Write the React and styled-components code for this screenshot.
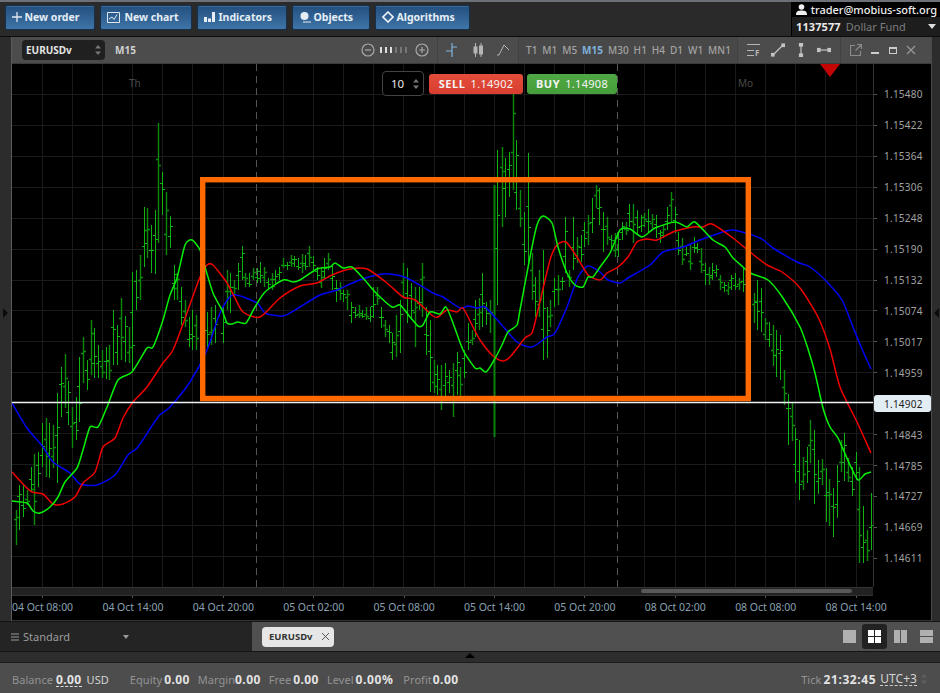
import React from 'react';
import styled, { createGlobalStyle } from 'styled-components';

const Global = createGlobalStyle`
  html, body { margin: 0; padding: 0; background: #2b2b2b; }
  body { font-family: "Noto Sans", "DejaVu Sans", sans-serif; overflow: hidden; }
`;

const bars = [[16,510,545],[19,485,530],[23,485,517],[27,490,505],[31,467,492],[34,454,525],[38,452,487],[42,423,467],[46,418,477],[49,423,478],[53,425,468],[57,393,483],[61,367,417],[65,354,408],[68,381,425],[72,407,448],[76,397,440],[79,357,422],[83,337,383],[87,360,390],[91,320,375],[94,328,378],[98,345,378],[102,350,378],[106,347,379],[109,345,380],[113,310,365],[117,325,365],[121,298,360],[125,316,362],[129,327,363],[132,272,370],[136,270,310],[140,255,300],[144,207,267],[147,208,258],[151,225,273],[155,210,274],[158,123,243],[162,172,215],[166,192,255],[170,216,248],[174,265,300],[177,273,300],[181,287,325],[185,300,327],[189,317,347],[192,310,350],[196,315,350],[207,312,350],[211,307,345],[215,305,343],[223,307,343],[227,270,310],[230,273,313],[234,280,297],[238,263,290],[242,246,280],[245,273,287],[249,273,287],[253,268,280],[257,268,283],[260,262,283],[264,267,287],[268,278,290],[272,273,290],[275,270,283],[279,267,280],[283,258,268],[287,262,270],[291,255,267],[294,256,267],[298,258,270],[302,254,273],[305,255,270],[309,246,267],[313,256,270],[317,267,280],[321,268,288],[324,258,278],[328,253,270],[332,265,290],[336,280,302],[340,282,300],[343,290,302],[347,290,310],[351,302,323],[355,307,318],[359,305,318],[362,310,318],[366,307,320],[370,307,322],[373,287,318],[377,287,305],[381,307,328],[385,320,337],[389,325,343],[392,333,360],[396,315,357],[400,300,353],[403,263,297],[407,268,323],[411,283,320],[415,287,347],[419,287,310],[422,263,317],[426,307,355],[430,320,392],[434,360,393],[437,365,395],[441,365,410],[445,363,396],[449,370,393],[453,363,417],[457,352,395],[460,367,397],[464,350,378],[468,323,350],[472,330,345],[475,300,337],[479,298,330],[482,273,327],[486,302,325],[490,300,333],[497,150,305],[502,147,227],[505,158,217],[509,152,197],[513,90,190],[516,140,210],[520,190,227],[524,212,265],[528,153,263],[532,253,300],[535,277,317],[539,270,317],[543,250,360],[547,307,358],[550,300,327],[554,278,307],[558,275,305],[562,277,290],[565,217,273],[569,270,287],[573,217,270],[577,237,263],[581,235,262],[584,222,247],[588,215,245],[592,198,233],[596,185,208],[599,188,225],[603,212,252],[607,217,245],[611,235,250],[615,233,257],[618,232,257],[622,222,240],[626,222,235],[629,204,227],[633,204,243],[637,210,235],[641,215,232],[644,213,227],[648,209,232],[652,214,228],[656,215,238],[660,230,243],[663,225,238],[667,207,230],[671,192,223],[675,207,233],[678,232,255],[682,238,265],[686,247,256],[690,245,270],[694,237,253],[697,243,253],[701,248,273],[705,263,285],[709,267,285],[712,263,280],[716,265,277],[720,275,290],[724,282,292],[728,282,295],[731,275,290],[735,273,290],[739,278,290],[743,267,292],[754,293,323],[757,280,330],[761,288,332],[765,318,340],[769,322,347],[773,325,366],[776,330,377],[780,335,380],[784,370,405],[788,394,445],[792,402,441],[795,428,483],[799,440,500],[803,457,490],[807,447,483],[810,420,463],[814,430,504],[818,460,494],[822,459,485],[826,468,522],[829,479,526],[833,488,537],[837,465,518],[841,440,472],[844,433,481],[848,458,482],[852,467,496],[856,452,480],[859,467,563],[863,506,563],[867,530,561],[871,493,550]];

const greenLine = [[12,501],[27,503],[33,511],[40,513],[50,507],[58,497],[65,482],[77,468],[83,450],[90,427],[98,427],[107,407],[118,380],[132,372],[147,348],[153,347],[163,320],[170,295],[177,278],[185,245],[192,240],[200,250],[205,267],[213,293],[222,310],[227,323],[232,324],[238,322],[246,323],[255,307],[265,292],[283,280],[293,282],[300,280],[317,269],[330,267],[335,263],[343,268],[352,267],[363,278],[375,292],[392,307],[400,305],[410,317],[418,326],[423,325],[430,312],[440,314],[446,307],[453,323],[463,350],[475,368],[480,368],[486,372],[493,362],[502,345],[508,332],[517,325],[520,310],[530,257],[537,225],[543,216],[552,223],[558,247],[567,273],[575,285],[583,287],[588,277],[593,277],[600,267],[610,253],[620,230],[630,229],[642,237],[655,228],[675,222],[687,227],[695,222],[713,240],[725,247],[733,258],[743,267],[750,273],[768,280],[783,298],[800,327],[808,349],[815,373],[823,408],[830,427],[838,438],[850,465],[858,480],[865,474],[871,472]];
const redLine = [[12,472],[22,483],[32,492],[43,494],[53,504],[63,504],[75,497],[83,483],[95,472],[103,447],[115,438],[123,418],[133,402],[147,387],[163,363],[173,350],[187,313],[200,277],[207,265],[213,265],[227,283],[235,298],[243,312],[260,317],[280,298],[300,286],[317,283],[332,275],[350,269],[367,269],[387,283],[403,297],[415,300],[433,316],[438,317],[447,310],[457,312],[463,308],[473,327],[480,340],[492,355],[502,361],[510,357],[525,338],[532,333],[538,310],[550,260],[557,245],[566,242],[577,257],[588,275],[600,280],[607,273],[618,267],[628,257],[637,242],[647,239],[657,240],[673,232],[693,227],[703,227],[712,224],[733,238],[750,252],[767,265],[782,272],[800,288],[818,317],[830,349],[840,387],[857,422],[871,453]];
const blueLine = [[12,403],[27,428],[43,447],[53,462],[70,473],[80,484],[97,485],[115,475],[128,455],[138,447],[158,417],[170,407],[190,382],[207,350],[220,313],[233,295],[257,303],[265,313],[283,316],[300,307],[320,295],[337,290],[357,281],[377,275],[390,274],[407,278],[433,293],[443,297],[460,308],[468,306],[477,308],[485,307],[500,323],[517,342],[532,347],[547,337],[555,333],[567,307],[578,277],[588,266],[600,272],[608,280],[620,283],[628,278],[650,265],[663,252],[683,247],[700,240],[717,234],[733,230],[760,238],[773,248],[797,262],[810,267],[827,282],[842,300],[853,327],[862,349],[871,369]];

const smooth = (p) => {
  let d = `M${p[0][0]} ${p[0][1]}`;
  for (let i = 0; i < p.length - 1; i++) {
    const a = p[Math.max(0, i - 1)], b = p[i], c = p[i + 1], e = p[Math.min(p.length - 1, i + 2)];
    const t = 0.12;
    d += `C${(b[0] + (c[0] - a[0]) * t).toFixed(1)} ${(b[1] + (c[1] - a[1]) * t).toFixed(1)} ${(c[0] - (e[0] - b[0]) * t).toFixed(1)} ${(c[1] - (e[1] - b[1]) * t).toFixed(1)} ${c[0]} ${c[1]}`;
  }
  return d;
};

const barPath = (list) => list.map(([x, t, b], i) => {
  const h = b - t;
  const o = Math.round(t + h * (0.25 + ((i * 37) % 50) / 100));
  const c = Math.round(t + h * (0.2 + ((i * 53) % 60) / 100));
  return `M${x + .5} ${t}V${b}M${x - 2} ${o + .5}H${x}M${x + 1} ${c + .5}H${x + 3}`;
}).join('');
const brightBars = barPath(bars.filter((_, i) => (i * 7) % 5 > 1));
const darkBars = barPath(bars.filter((_, i) => (i * 7) % 5 <= 1));

const gridX = [42,72,102,132,162,192,223,283,313,343,373,403,434,464,494,524,554,584,644,675,705,735,765,795,825,856];
const gridY = [94,125,156,187,218,249,280,310,341,372,433,464,495,525,556];
const prices = ['1.15480','1.15422','1.15364','1.15306','1.15248','1.15190','1.15132','1.15074','1.15017','1.14959','1.14902','1.14843','1.14785','1.14727','1.14669','1.14611'];
const times = ['04 Oct 08:00','04 Oct 14:00','04 Oct 20:00','05 Oct 02:00','05 Oct 08:00','05 Oct 14:00','05 Oct 20:00','08 Oct 02:00','08 Oct 08:00','08 Oct 14:00'];
const frames = ['T1','M1','M5','M15','M30','H1','H4','D1','W1','MN1'];

const Page = styled.div`
  width: 940px; height: 693px; display: flex; flex-direction: column; overflow: hidden; background: #2b2b2b;
`;
const TopBar = styled.header`
  height: 34px; flex: none; display: flex; justify-content: space-between;
  border-top: 2px solid #6d7177; border-bottom: 1px solid #0c0c0c; background: #2a2a2a;
`;
const Actions = styled.div`
  display: flex; gap: 5px; padding: 3px 0 0 4.5px;
`;
const ActionButton = styled.button`
  width: ${p => p.$w}px; height: 25px; padding: 0 0 2px ${p => p.$pad}px; margin: 0; display: flex; align-items: center; gap: ${p => p.$gap}px;
  border: 1px solid #16304c; border-radius: 2px; background: linear-gradient(#234f7e, #3f75a8);
  color: #e6eef5; font: 700 10.5px "Noto Sans", sans-serif; white-space: nowrap;
  box-shadow: inset 0 1px 0 #3b6a9b;
`;
const User = styled.div`
  width: 149px; background: #000; display: flex; flex-direction: column; font-size: 11px;
`;
const UserLine = styled.div`
  height: 15px; display: flex; align-items: center; padding-left: 5px; gap: 1px; color: #eee; white-space: nowrap; font-weight: 500; letter-spacing: -.02px;
`;
const AccountLine = styled.div`
  flex: 1; display: flex; align-items: center; padding: 0 4px 0 4px; gap: 5px; background: #1d1d1d; border-left: 1px solid #000; white-space: nowrap;
`;
const AccountId = styled.b`color: #e8e8e8; letter-spacing: .1px;`;
const AccountName = styled.span`color: #7c7c7c; flex: 1;`;
const Caret = styled.span`
  width: 0; height: 0; border: 4px solid transparent; border-top: 5px solid #ddd; border-bottom: 0;
`;

const Middle = styled.div`
  height: 584px; flex: none; display: flex;
`;
const SideStrip = styled.div`
  width: ${p => p.$w}px; box-sizing: border-box; flex: none; display: flex; align-items: center; justify-content: center; background: #2c2c2c;
  ${p => p.$left ? 'border-right: 1px solid #5a5a5a;' : 'border-left: 1px solid #4a4a4a;'}
`;
const Arrow = styled.i`
  width: 0; height: 0; margin-top: -32px; border: 5px solid transparent;
  ${p => p.$left ? 'border-left: 5px solid #0c0c0c; border-right: 0;' : 'border-right: 5px solid #0c0c0c; border-left: 0;'}
`;
const ChartWindow = styled.section`
  flex: 1; display: flex; flex-direction: column; background: #000; min-width: 0;
`;
const ChartHeader = styled.div`
  height: 27px; flex: none; display: flex; align-items: stretch; background: #4a4a4a; border-bottom: 1px solid #3a3a3a; box-sizing: border-box;
`;
const HeaderGroup = styled.div`
  width: ${p => p.$w}px; flex: none; display: flex; align-items: center; box-sizing: border-box; padding: ${p => p.$pad || '0'};
  gap: ${p => p.$gap || 0}px; justify-content: ${p => p.$justify || 'flex-start'};
  background: ${p => p.$alt ? '#484848' : '#4c4c4c'};
  border-right: ${p => p.$end ? 0 : '1px solid #414141'};
`;
const SymbolSelect = styled.div`
  width: 83px; height: 20px; margin-left: 10px; box-sizing: border-box; padding: 0 4px; display: flex; align-items: center; justify-content: space-between;
  background: #202020; border-radius: 4px; color: #e4e4e4; font-size: 10px; font-weight: 700;
`;
const Period = styled.span`
  margin-left: 10px; color: #d0d0d0; font-size: 10px; font-weight: 700;
`;
const Spacer = styled.div`flex: 1;`;
const ZoomDots = styled.svg`
  margin: 0 5px;
`;
const EndGap = styled.div`width: 8px;`;
const Frame = styled.span`
  color: ${p => p.$on ? '#7fb2dc' : '#a3a3a3'}; font-size: 10px; font-weight: ${p => p.$on ? 700 : 500}; letter-spacing: .1px;
`;
const ChartBody = styled.div`
  height: 523px; flex: none; display: flex; position: relative;
`;
const Plot = styled.svg`
  width: 861px; height: 523px; flex: none; display: block;
`;
const DayLabel = styled.text`
  fill: #4a4a4a; font: 10px "Noto Sans", sans-serif;
`;
const PriceAxis = styled.div`
  flex: 1; display: flex; flex-direction: column; padding-top: 15px; border-left: 1px solid #333; background: #000;
`;
const PriceRow = styled.div`
  height: 30.93px; flex: none; display: flex; align-items: center; position: relative; font-size: 10px; letter-spacing: .25px;
  color: #a2a2a2; padding-left: 10px;
  &::before { content: ""; position: absolute; left: 0; top: 15px; width: 3px; height: 1px; background: #555; }
`;
const PriceTag = styled.span`
  position: absolute; left: 0; top: 7px; width: 57px; height: 17px; box-sizing: border-box; padding-left: 10px; display: flex; align-items: center;
  background: #e2eef4; border-radius: 3px; color: #222;
`;
const Scrollbar = styled.div`
  height: 9px; width: 861px; flex: none; box-sizing: border-box; background: #222; border-top: 1px solid #333; border-bottom: 1px solid #333; padding: 1px 0 0 629px;
`;
const ScrollThumb = styled.div`
  width: 211px; height: 4px; border-radius: 2px; background: #585858;
`;
const TimeAxis = styled.div`
  height: 25px; flex: none; display: flex; background: #000; border-bottom: 1px solid #333; box-sizing: border-box;
`;
const TimeLabel = styled.span`
  width: 90.4px; flex: none; position: relative; padding-top: 4px; box-sizing: border-box; color: #8ba0b2; font-size: 10.5px; letter-spacing: -.02px; white-space: nowrap; line-height: 14px;
  &::before { content: ""; position: absolute; left: 30px; top: 0; width: 1px; height: 2px; background: #555; }
`;

const OrderPanel = styled.div`
  position: absolute; left: 370px; top: 7px; display: flex; align-items: center; gap: 5px;
`;
const Qty = styled.div`
  width: 42px; height: 25px; box-sizing: border-box; display: flex; align-items: center; justify-content: space-between; padding: 0 4px 0 8px;
  background: #000; border: 1px solid #444; border-radius: 4px; color: #e8e8e8; font-size: 11.5px;
`;
const TradeButton = styled.div`
  width: ${p => p.$w}px; height: 20px; display: flex; align-items: center; justify-content: center; gap: 5px; border-radius: 3px;
  background: ${p => p.$c}; color: #f4f4f4; font-size: 11px; letter-spacing: .3px; white-space: nowrap;
  margin-left: ${p => p.$ml || 0}px;
  b { font-weight: 700; letter-spacing: .6px; }
`;

const TabBar = styled.div`
  height: 30px; flex: none; display: flex; border-top: 1px solid #141414; box-sizing: border-box;
`;
const WorkspacePicker = styled.div`
  width: 252px; flex: none; box-sizing: border-box; padding: 0 123px 0 11px; display: flex; align-items: center; gap: 4px; background: #242424; color: #9c9c9c; font-size: 11px;
`;
const WorkspaceCaret = styled.i`
  margin-left: auto; width: 0; height: 0; border: 3.5px solid transparent; border-top: 4px solid #9a9a9a; border-bottom: 0;
`;
const TabStrip = styled.div`
  flex: 1; display: flex; align-items: center; padding: 0 1px 0 10px; background: #505050;
`;
const Tab = styled.div`
  width: 72px; height: 20px; box-sizing: border-box; padding: 0 4px 0 7px; display: flex; align-items: center; justify-content: space-between;
  border-radius: 4px; background: #e6e6e6; color: #333; font-size: 9.5px; font-weight: 700;
`;
const Layouts = styled.div`
  margin-left: auto; display: flex; align-items: center;
`;
const LayoutSlot = styled.div`
  width: ${p => p.$w}px; height: 25px; display: flex; align-items: center; justify-content: center; border-radius: 3px;
  background: ${p => p.$on ? '#222' : 'transparent'};
`;
const Stripe = styled.div`
  height: 12px; flex: none; display: flex; justify-content: center; background: #2d2d2d; border-top: 1px solid #151515; border-bottom: 1px solid #1b1b1b; box-sizing: border-box;
`;
const StripeArrow = styled.i`
  width: 0; height: 0; margin-top: 1px; border: 5px solid transparent; border-bottom: 5px solid #000; border-top: 0;
`;
const StatusBar = styled.footer`
  height: 30px; flex: none; display: flex; align-items: center; box-sizing: border-box; padding: 2px 13px 0 12px; background: #4d4d4d; font-size: 11px; color: #939393; white-space: nowrap; letter-spacing: .05px;
`;
const Stat = styled.span`
  margin-right: ${p => p.$mr ?? 8}px; display: inline-flex; align-items: baseline; gap: ${p => p.$gap ?? 2}px;
`;
const Value = styled.b`
  color: #e4e4e4; font-size: 12px; letter-spacing: ${p => p.$ls ?? 0.4}px;
`;
const DashedValue = styled(Value)`
  border-bottom: 1px dashed #ddd; line-height: 13px;
`;
const Plain = styled.span`
  color: #d4d4d4; margin-left: 2px;
`;
const UtcValue = styled.span`
  color: #d4d4d4; font-size: 12px; border-bottom: 1px dashed #ccc; line-height: 13px;
`;
const SpinBox = styled.span`
  margin-left: 4px; display: flex;
`;
const IconBox = styled.svg`
  flex: none;
`;

const Spin = ({ c = '#777' }) => (
  <svg width="6" height="12" viewBox="0 0 6 12"><path d="M3 1 6 4.500H0zM3 11 0 7.500H6z" fill={c} /></svg>
);
const Ic = ({ w = 14, h = 14, children, s = '#a8a8a8', sw = 1.2 }) => (
  <IconBox width={w} height={h} viewBox={`0 0 ${w} ${h}`} fill="none" stroke={s} strokeWidth={sw}>{children}</IconBox>
);

export default function App() {
  return (
    <Page>
      <Global />
      <TopBar>
        <Actions>
          <ActionButton $w={90} $pad={6} $gap={3}><Ic w={10} h={10} s="#dfe8f0" sw={1.3}><path d="M5 0v10M0 5h10" /></Ic>New order</ActionButton>
          <ActionButton $w={92} $pad={6} $gap={5}><Ic w={13} h={12} s="#dfe8f0" sw={1}><path d="M.5 1.500h12v10H.5z" /><path d="M2 8l3-2 2 2.500 3-5" /></Ic>New chart</ActionButton>
          <ActionButton $w={90} $pad={6} $gap={4}><svg width="11" height="11" viewBox="0 0 11 11" fill="#e6eef5"><path d="M0 6h3v5H0zM4 7.500h3V11H4zM8 1h3v10H8z" /></svg>Indicators</ActionButton>
          <ActionButton $w={78} $pad={7} $gap={3}><svg width="11" height="12" viewBox="0 0 11 12" fill="#e6eef5"><circle cx="4.500" cy="5" r="4" /><path d="M3 10.500h8v1H3z" /></svg>Objects</ActionButton>
          <ActionButton $w={95} $pad={6} $gap={3}><Ic w={12} h={12} s="#eef3f8" sw={1.6}><path d="M6 1 11 6 6 11 1 6z" /></Ic>Algorithms</ActionButton>
        </Actions>
        <User>
          <UserLine>
            <svg width="11" height="11" viewBox="0 0 11 11" fill="#f0f0f0"><circle cx="5.500" cy="3" r="2.800" /><path d="M0 11c0-4 2.500-4.500 5.500-4.500S11 7 11 11z" /></svg>
            &nbsp;trader@mobius-soft.org
          </UserLine>
          <AccountLine><AccountId>1137577</AccountId><AccountName>Dollar Fund</AccountName><Caret /></AccountLine>
        </User>
      </TopBar>
      <Middle>
        <SideStrip $w={12} $left><Arrow $left /></SideStrip>
        <ChartWindow>
          <ChartHeader>
            <HeaderGroup $w={426}>
              <SymbolSelect>EURUSDv<Spin /></SymbolSelect>
              <Period>M15</Period>
              <Spacer />
              <Ic w={14} h={14}><circle cx="7" cy="7" r="6" /><path d="M4 7h6" /></Ic>
              <ZoomDots width="30" height="6" viewBox="0 0 30 6">
                <path d="M1 0v6M6 0v6M11 0v6" stroke="#ddd" strokeWidth="2" />
                <path d="M16 0v6M21 0v6M26 0v6" stroke="#777" strokeWidth="2" />
              </ZoomDots>
              <Ic w={14} h={14}><circle cx="7" cy="7" r="6" /><path d="M4 7h6M7 4v6" /></Ic>
              <EndGap />
            </HeaderGroup>
            <HeaderGroup $w={81} $pad="0 0 0 8px" $gap={12}>
              <Ic w={15} h={14} s="#7fb2dc"><path d="M6 0v14M0 8h6M6 4h5" /></Ic>
              <svg width="11" height="14" viewBox="0 0 11 14" fill="#b5b5b5" stroke="#b5b5b5"><path d="M2.500 0v14M8 0v14" fill="none" /><rect x="1" y="4" width="3" height="6" /><rect x="6.500" y="3" width="3" height="8" /></svg>
              <Ic w={14} h={14} s="#b5b5b5" sw={1}><path d="M1 12h2L8 2l5 5" /></Ic>
            </HeaderGroup>
            <HeaderGroup $w={219} $alt $pad="0 6px 0 7px" $justify="space-between">
              {frames.map(f => <Frame key={f} $on={f === 'M15'}>{f}</Frame>)}
            </HeaderGroup>
            <HeaderGroup $w={103} $pad="0 0 0 8px" $gap={10}>
              <svg width="15" height="14" viewBox="0 0 15 14" fill="none" stroke="#b5b5b5"><path d="M1 1.500h13M1 7.500h7M1 12.500h7" /><text x="9" y="13" fontSize="8" fontWeight="700" fill="#b5b5b5" stroke="none">F</text></svg>
              <Ic w={14} h={14} s="#c4c4c4"><path d="M2 12 12 2" /><rect x="0.500" y="10.500" width="2.500" height="2.500" fill="#c4c4c4" /><rect x="11" y="1" width="2.500" height="2.500" fill="#c4c4c4" /></Ic>
              <Ic w={12} h={14} s="#c4c4c4"><path d="M6 1v12" /><rect x="4.500" y="0.500" width="3" height="2.500" fill="#c4c4c4" /><rect x="4.500" y="11" width="3" height="2.500" fill="#c4c4c4" /></Ic>
              <Ic w={14} h={6} s="#c4c4c4"><path d="M1 3h12" /><rect x="0.500" y="1.500" width="2.500" height="3" fill="#c4c4c4" /><rect x="11" y="1.500" width="2.500" height="3" fill="#c4c4c4" /></Ic>
            </HeaderGroup>
            <HeaderGroup $w={89} $end $pad="0 0 0 9px" $gap={8}>
              <Ic w={12} h={12} s="#8a8a8a"><path d="M5 1.500H.5v10h10V7M7 .5h4.500V5M11.500.5 5.500 6.500" /></Ic>
              <svg width="10" height="10" viewBox="0 0 10 10"><path d="M1 8h8" stroke="#ccc" strokeWidth="2" /></svg>
              <svg width="10" height="10" viewBox="0 0 10 10" fill="none" stroke="#ccc"><rect x="1.500" y="2.500" width="7" height="6" /><path d="M1 3h8" strokeWidth="2" /></svg>
              <Ic w={10} h={10} s="#9a9a9a"><path d="M1 1l8 8M9 1l-8 8" /></Ic>
            </HeaderGroup>
          </ChartHeader>
          <ChartBody>
            <Plot viewBox="12 64 861 523">
              <g stroke="#1b1b1b" strokeWidth="1">
                {gridX.map(x => <line key={x} x1={x + .5} x2={x + .5} y1="64" y2="587" />)}
                {gridY.map(y => <line key={y} x1="12" x2="873" y1={y + .5} y2={y + .5} />)}
              </g>
              <g stroke="#555" strokeDasharray="7 5">
                <line x1="256.500" x2="256.500" y1="64" y2="587" />
                <line x1="617.500" x2="617.500" y1="64" y2="587" />
              </g>
              <DayLabel x="129" y="87">Th</DayLabel>
              <DayLabel x="738" y="87">Mo</DayLabel>
              <path d={darkBars} stroke="#0c8a0c" strokeWidth="1.400" fill="none" />
              <path d={brightBars} stroke="#10b410" strokeWidth="1" fill="none" shapeRendering="crispEdges" />
              <path d="M494.500 185V437" stroke="#0b820b" strokeWidth="2" fill="none" />
              <path d={smooth(blueLine)} stroke="#0000f4" strokeWidth="1.500" fill="none" />
              <path d={smooth(redLine)} stroke="#f00000" strokeWidth="1.500" fill="none" />
              <path d={smooth(greenLine)} stroke="#08f008" strokeWidth="1.500" fill="none" />
              <line x1="12" x2="873" y1="402.500" y2="402.500" stroke="#eef2f2" strokeWidth="1.400" />
              <rect x="202.700" y="179.700" width="545.600" height="218.800" fill="none" stroke="#ff6a00" strokeWidth="5.400" />
              <path d="M820 64h20l-10 13z" fill="#c40505" />
            </Plot>
            <PriceAxis>
              {prices.map((p, i) => (
                <PriceRow key={p}>
                  {i === 10 ? <PriceTag>{p}</PriceTag> : p}
                </PriceRow>
              ))}
            </PriceAxis>
            <OrderPanel>
              <Qty>10<Spin /></Qty>
              <TradeButton $w={94} $c="linear-gradient(#e24d3a, #d93e30)"><b>SELL</b> 1.14902</TradeButton>
              <TradeButton $ml={-1} $w={90} $c="linear-gradient(#4fa843, #469d3b)"><b>BUY</b> 1.14908</TradeButton>
            </OrderPanel>
          </ChartBody>
          <Scrollbar><ScrollThumb /></Scrollbar>
          <TimeAxis>{times.map(t => <TimeLabel key={t}>{t}</TimeLabel>)}</TimeAxis>
        </ChartWindow>
        <SideStrip $w={9}><Arrow /></SideStrip>
      </Middle>
      <TabBar>
        <WorkspacePicker>
          <svg width="8" height="8" viewBox="0 0 8 8" stroke="#999"><path d="M0 1h8M0 4h8M0 7h8" /></svg>
          Standard
          <WorkspaceCaret />
        </WorkspacePicker>
        <TabStrip>
          <Tab>EURUSDv<Ic w={9} h={9} s="#555" sw={1}><path d="M1 1l7 7M8 1 1 8" /></Ic></Tab>
          <Layouts>
            <LayoutSlot $w={25}><svg width="13" height="13" fill="#b0b0b0"><rect width="13" height="13" /></svg></LayoutSlot>
            <LayoutSlot $w={25} $on><svg width="13" height="13" fill="#fff"><path d="M0 0h6v6H0zM7 0h6v6H7zM0 7h6v6H0zM7 7h6v6H7z" /></svg></LayoutSlot>
            <LayoutSlot $w={26}><svg width="13" height="13" fill="#b0b0b0"><path d="M0 0h6v13H0zM7 0h6v13H7z" /></svg></LayoutSlot>
            <LayoutSlot $w={26}><svg width="13" height="13" fill="#b0b0b0"><path d="M0 0h13v6H0zM0 7h13v6H0z" /></svg></LayoutSlot>
          </Layouts>
        </TabStrip>
      </TabBar>
      <Stripe><StripeArrow /></Stripe>
      <StatusBar>
        <Stat $mr={21} $gap={3}>Balance <DashedValue>0.00</DashedValue><Plain>USD</Plain></Stat>
        <Stat>Equity <Value>0.00</Value></Stat>
        <Stat $gap={0}>Margin <Value>0.00</Value></Stat>
        <Stat>Free <Value>0.00</Value></Stat>
        <Stat $mr={10}>Level <Value $ls={0.6}>0.00%</Value></Stat>
        <Stat $mr={0} $gap={1}>Profit <Value>0.00</Value></Stat>
        <Spacer />
        <Stat $mr={4}>Tick <Value $ls={0.6}>21:32:45</Value></Stat>
        <UtcValue>UTC+3</UtcValue>
        <SpinBox><Spin c="#5f5f5f" /></SpinBox>
      </StatusBar>
    </Page>
  );
}
